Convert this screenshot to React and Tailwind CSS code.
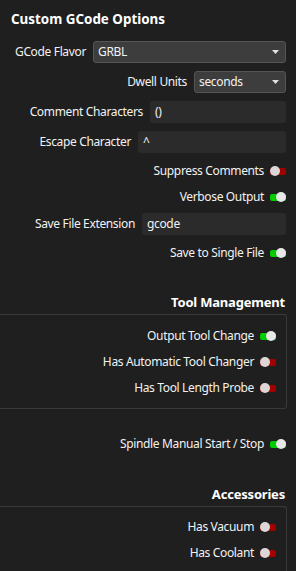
import React from "react"

const font = { fontFamily: '"Noto Sans", "Open Sans", sans-serif' }

function Toggle({ on }) {
  return (
    <div className="relative w-4 h-[10px] shrink-0">
      <div className={`absolute left-0 right-0 top-[2px] h-[7px] rounded-[2px] ${on ? "bg-[#00cc00]" : "bg-[#a30000]"}`}></div>
      <div className={`absolute top-0 w-[10px] h-[10px] rounded-full ${on ? "right-0 bg-[#e8e8e8]" : "left-0 bg-[#ddd6d6]"}`}></div>
    </div>
  )
}

function Label({ children }) {
  return <span className="text-[12px] text-[#f2f2f2] leading-none tracking-[-0.35px]">{children}</span>
}

function ToggleRow({ label, on }) {
  return (
    <div className="flex items-center justify-end gap-[6px] h-[26px]">
      <Label>{label}</Label>
      <Toggle on={on} />
    </div>
  )
}

function Combo({ value, className }) {
  return (
    <div className={`h-[22px] flex items-center justify-between pl-[4px] pr-[6px] bg-[#3d3d3d] border border-[#555] rounded-[3px] ${className}`}>
      <Label>{value}</Label>
      <svg width="7" height="4" viewBox="0 0 7 4"><path d="M0 0 L7 0 L3.5 4 Z" fill="#e0e0e0" /></svg>
    </div>
  )
}

function Field({ label, value, inputW }) {
  return (
    <div className="flex items-center justify-end gap-[7px] h-[22px]">
      <Label>{label}</Label>
      <div className={`h-[22px] flex items-center pl-[5px] bg-[#2b2b2b] rounded-[3px] ${inputW}`}>
        <Label>{value}</Label>
      </div>
    </div>
  )
}

export default function App() {
  return (
    <div className="w-[296px] h-[571px] bg-[#1f1f1f] overflow-hidden" style={font}>
      <div className="pl-[11px] pr-[10px] pt-[11px]">
        <h1 className="text-[13.4px] font-bold text-white leading-[16px]">Custom GCode Options</h1>

        <div className="mt-[14px] flex items-center gap-[7px] pl-[4px]">
          <Label>GCode Flavor</Label>
          <Combo value="GRBL" className="flex-1" />
        </div>

        <div className="mt-[8px] flex items-center justify-end gap-[7px]">
          <Label>Dwell Units</Label>
          <Combo value="seconds" className="w-[92px]" />
        </div>

        <div className="mt-[8px]">
          <Field label="Comment Characters" value="()" inputW="w-[136px]" />
        </div>
        <div className="mt-[8px]">
          <Field label="Escape Character" value="^" inputW="w-[148px]" />
        </div>

        <div className="mt-[5px]">
          <ToggleRow label="Suppress Comments" on={false} />
          <ToggleRow label="Verbose Output" on={true} />
        </div>

        <div className="mt-[3px]">
          <Field label="Save File Extension" value="gcode" inputW="w-[144px]" />
        </div>

        <div className="mt-[5px]">
          <ToggleRow label="Save to Single File" on={true} />
        </div>
      </div>

      <div className="mt-[28px] pr-[11px] text-right">
        <h2 className="text-[13px] font-bold text-white leading-[16px] tracking-[-0.2px]">Tool Management</h2>
      </div>

      <div className="mt-[4px] w-[287px] h-[95px] border-t border-r border-b border-[#3a3a3a] rounded-tr-[3px] rounded-br-[3px] pr-[10px] pt-[8px]">
        <ToggleRow label="Output Tool Change" on={true} />
        <ToggleRow label="Has Automatic Tool Changer" on={false} />
        <ToggleRow label="Has Tool Length Probe" on={false} />
      </div>

      <div className="mt-[22px] pr-[10px]">
        <ToggleRow label="Spindle Manual Start / Stop" on={true} />
      </div>

      <div className="mt-[29px] pr-[11px] text-right">
        <h2 className="text-[13px] font-bold text-white leading-[16px] tracking-[-0.2px]">Accessories</h2>
      </div>

      <div className="mt-[4px] w-[287px] h-[100px] border-t border-r border-[#3a3a3a] rounded-tr-[3px] pr-[10px] pt-[7px]">
        <ToggleRow label="Has Vacuum" on={false} />
        <ToggleRow label="Has Coolant" on={false} />
      </div>
    </div>
  )
}
